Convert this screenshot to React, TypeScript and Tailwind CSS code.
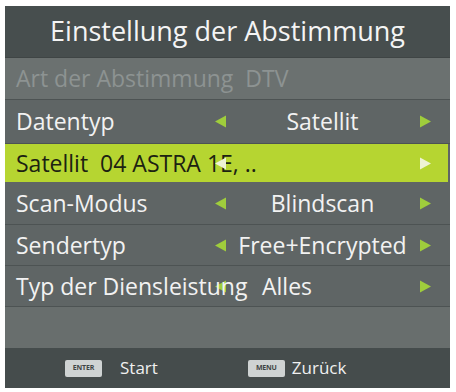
import React from "react";

const Left = ({ c = "#9fcd3c" }: { c?: string }) => (
  <svg width="13" height="13" viewBox="0 0 13 13"><polygon points="12,0.5 12,12.5 1,6.5" fill={c} /></svg>
);
const Right = ({ c = "#9fcd3c" }: { c?: string }) => (
  <svg width="13" height="13" viewBox="0 0 13 13"><polygon points="1,0.5 1,12.5 12,6.5" fill={c} /></svg>
);

type RowProps = { label: string; value: string; h: string; valueLeft?: boolean };

const Row = ({ label, value, h, valueLeft }: RowProps) => (
  <div className={`grid grid-cols-[205px_20px_185px_20px_15px] items-center border-b border-[#4d5353] bg-[#5f6565] ${h}`}>
    <div className="pl-[11px] whitespace-nowrap text-[23px] text-[#f2f2f2] relative z-10">{label}</div>
    <div className="flex justify-center"><Left /></div>
    <div className={`whitespace-nowrap text-[23px] text-[#f2f2f2] ${valueLeft ? "text-left pl-[32px]" : "text-center"}`}>{value}</div>
    <div className="flex justify-center"><Right /></div>
    <div />
  </div>
);

const Key = ({ t }: { t: string }) => (
  <span className="inline-flex h-[17px] w-[37px] items-center justify-center rounded-[2px] bg-[#cfd3d3] text-[7px] font-bold tracking-tight text-[#3f4545]">{t}</span>
);

export default function App() {
  return (
    <div className="h-[392px] w-[456px] bg-white pl-[5px] pt-[6px]" style={{ fontFamily: '"Open Sans", sans-serif' }}>
      <div className="flex h-[382px] w-[445px] flex-col overflow-hidden bg-[#5f6565]">
        <div className="flex h-[52px] items-center justify-center border-b border-[#3f4545] bg-[#474e4e] text-[27px] text-[#f4f4f4]">
          Einstellung der Abstimmung
        </div>
        <div className="flex h-[42px] items-center gap-[12px] border-b border-[#4d5353] bg-[#6b7170] pl-[11px] text-[23px] text-[#8d9392]">
          <span>Art der Abstimmung</span><span>DTV</span>
        </div>
        <Row label="Datentyp" value="Satellit" h="h-[44px]" />
        <div className="grid h-[38px] grid-cols-[205px_20px_185px_20px_15px] items-center bg-[#b6d531] mr-[2px]">
          <div className="pl-[11px] whitespace-nowrap text-[23px] text-[#1c2212]">Satellit&nbsp; 04 ASTRA 1E, ..</div>
          <div className="relative z-10 flex justify-center"><Left c="#eef3d6" /></div>
          <div />
          <div className="flex justify-center"><Right c="#eef3d6" /></div>
          <div />
        </div>
        <Row label="Scan-Modus" value="Blindscan" h="h-[43px]" />
        <Row label="Sendertyp" value="Free+Encrypted" h="h-[41px]" />
        <Row label="Typ der Diensleistung" value="Alles" h="h-[41px]" valueLeft />
        <div className="h-[41px] bg-[#686e6d]" />
        <div className="flex h-[40px] items-center bg-[#454c4c] text-[17px] text-[#f0f0f0]">
          <div className="ml-[60px] flex items-center gap-[18px]"><Key t="ENTER" /><span>Start</span></div>
          <div className="ml-[90px] flex items-center gap-[7px]"><Key t="MENU" /><span>Zurück</span></div>
        </div>
      </div>
    </div>
  );
}
